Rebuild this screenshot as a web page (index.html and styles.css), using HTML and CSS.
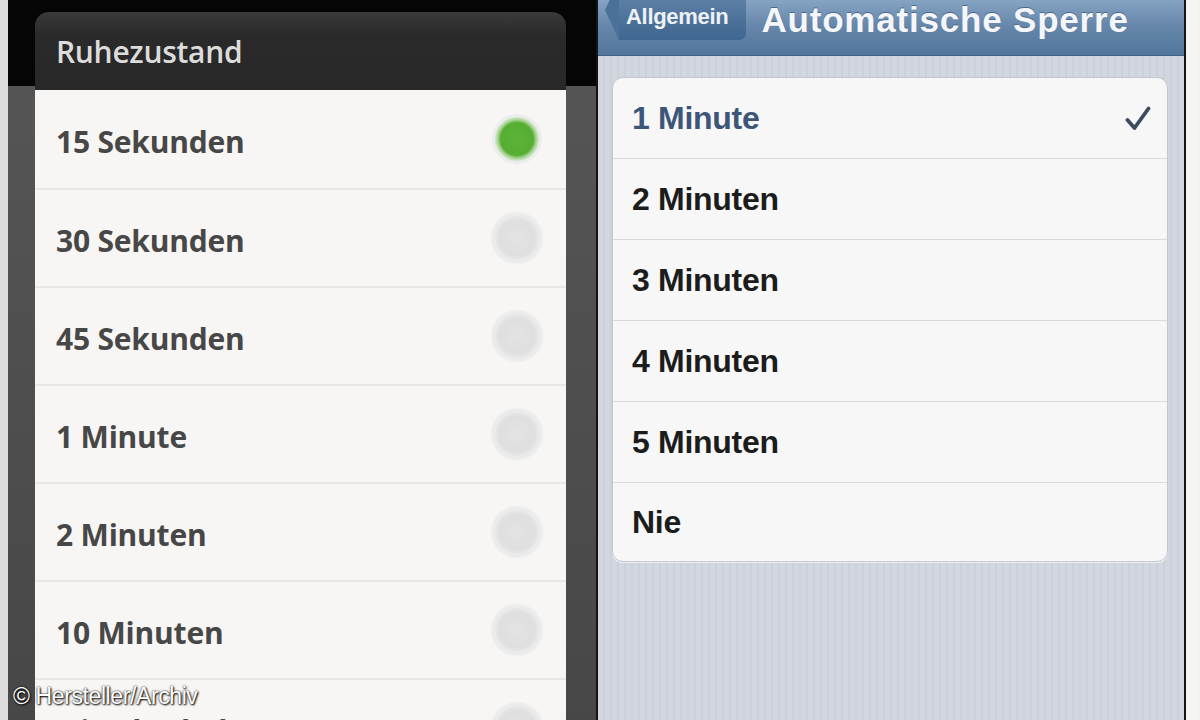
FILE: index.html
```html
<!DOCTYPE html>
<html lang="de">
<head>
  <meta charset="UTF-8" />
  <title>Ruhezustand / Automatische Sperre</title>
  <link rel="stylesheet" href="styles.css">
</head>
<body>
  <div class="frame">
    <div class="edge-left"></div>

    <!-- Android -->
    <div class="android">
      <div class="dialog">
        <div class="dialog-title">Ruhezustand</div>
        <ul class="choices">
          <li><span>15 Sekunden</span><i class="radio on"></i></li>
          <li><span>30 Sekunden</span><i class="radio"></i></li>
          <li><span>45 Sekunden</span><i class="radio"></i></li>
          <li><span>1 Minute</span><i class="radio"></i></li>
          <li><span>2 Minuten</span><i class="radio"></i></li>
          <li><span>10 Minuten</span><i class="radio"></i></li>
          <li><span>Nie abschalten</span><i class="radio"></i></li>
        </ul>
      </div>
    </div>

    <div class="rim"></div>

    <!-- iOS -->
    <div class="ios">
      <div class="navbar">
        <span class="back">Allgemein</span>
        <span class="nav-title">Automatische Sperre</span>
      </div>
      <div class="group">
        <div class="cell selected">1 Minute
          <svg class="check" width="26" height="25" viewBox="0 0 26 25"><path d="M2.5 14 L9.5 22 L23.5 2.5" fill="none" stroke="#3b4c61" stroke-width="3.8" stroke-linecap="round" stroke-linejoin="round"/></svg>
        </div>
        <div class="cell">2 Minuten</div>
        <div class="cell">3 Minuten</div>
        <div class="cell">4 Minuten</div>
        <div class="cell">5 Minuten</div>
        <div class="cell">Nie</div>
      </div>
    </div>

    <div class="rim"></div>
    <div class="edge-right"></div>

    <div class="credit">© Hersteller/Archiv</div>
  </div>
</body>
</html>
```

FILE: styles.css
```css
html, body {
  margin: 0;
  padding: 0;
}
body {
  background: #f2f2f2;
}
.frame {
  position: relative;
  display: flex;
  width: 1200px;
  height: 720px;
  overflow: hidden;
}
.edge-left {
  width: 8px;
  background: #dcdcdc;
}
.edge-right {
  width: 12px;
  background: #f5f5f3;
}
.rim {
  width: 2px;
  background: #141414;
}

/* Android side */
.android {
  width: 588px;
  background: linear-gradient(#050505 0, #050505 86px, #555 86px, #474747 100%);
  padding-top: 12px;
}
.dialog {
  margin-left: 27px;
  width: 531px;
  border-radius: 14px 14px 0 0;
  overflow: hidden;
  font-family: "Open Sans", "DejaVu Sans", sans-serif;
}
.dialog-title {
  height: 78px;
  line-height: 80px;
  padding-left: 21px;
  background: linear-gradient(#3a3a3a, #2a2a2a 30%, #282828);
  color: #dcdcdc;
  font-size: 30px;
  font-weight: 600;
  letter-spacing: -0.3px;
}
.choices {
  list-style: none;
  margin: 0;
  padding: 0;
  background: #f7f6f4;
}
.choices li {
  display: flex;
  align-items: center;
  justify-content: space-between;
  box-sizing: border-box;
  height: 98px;
  padding: 4px 26px 0 21px;
  border-top: 2px solid #e8e7e5;
  color: #474747;
  font-size: 30px;
  font-weight: 700;
  letter-spacing: -0.2px;
}
.choices li:first-child {
  border-top: none;
}
.radio {
  width: 46px;
  height: 46px;
  border-radius: 50%;
  background: radial-gradient(circle, #e3e3e3 0, #dfdfdf 55%, #ebebeb 70%, #f1f1f1 100%);
  box-shadow: 0 0 0 2px #ebebeb, 0 0 3px 2px #e4e4e4;
  margin-top: -4px;
}
.radio.on {
  background: radial-gradient(circle, #5db43a 0, #55ad31 50%, #9fd088 58%, #eaf0ea 70%, #f3f3f3 100%);
  box-shadow: 0 0 0 2px #ececef;
}

/* iOS side */
.ios {
  width: 586px;
  background: repeating-linear-gradient(90deg, #d2d7df 0, #d2d7df 5px, #cbd1da 5px, #cbd1da 7px);
  font-family: "Liberation Sans", Arial, sans-serif;
}
.navbar {
  display: flex;
  align-items: flex-start;
  gap: 15px;
  height: 55px;
  padding-left: 7px;
  background: linear-gradient(#86a3c2, #6787ab 45%, #52769c);
  border-bottom: 1px solid #3f5f80;
}
.back {
  position: relative;
  height: 40px;
  line-height: 34px;
  margin-left: 14px;
  padding: 0 18px 0 7px;
  background: linear-gradient(#5b7ea4, #3f6690);
  border-radius: 0 0 7px 0;
  color: #eef2f7;
  font-size: 22px;
  font-weight: 700;
  letter-spacing: -0.3px;
}
.back::before {
  content: "";
  position: absolute;
  left: -14px;
  top: -20px;
  border-style: solid;
  border-width: 30px 14px 30px 0;
  border-color: transparent #4b7099 transparent transparent;
}
.nav-title {
  line-height: 39px;
  color: #f4f6f9;
  font-size: 35px;
  font-weight: 700;
  letter-spacing: 0.8px;
  text-shadow: 0 -1px 0 #4a6a8c;
}
.group {
  margin: 21px 16px 0 14px;
  background: #f7f7f7;
  border: 1px solid #c3c8cf;
  border-radius: 11px;
  box-shadow: 0 1px 0 #eef0f3;
  overflow: hidden;
}
.cell {
  display: flex;
  align-items: center;
  justify-content: space-between;
  height: 80px;
  padding: 0 16px 0 19px;
  border-top: 1px solid #dadada;
  color: #1c1c1c;
  font-size: 32px;
  font-weight: 700;
  letter-spacing: -0.3px;
}
.cell:first-child {
  border-top: none;
}
.cell:last-child {
  height: 78px;
}
.cell.selected {
  color: #3d5579;
}

.credit {
  position: absolute;
  left: 13px;
  top: 683px;
  color: #fff;
  font-family: "Liberation Sans", Arial, sans-serif;
  font-size: 23px;
  letter-spacing: -0.4px;
  text-shadow: 0 0 2px #000, 1px 1px 2px #000;
}
```
